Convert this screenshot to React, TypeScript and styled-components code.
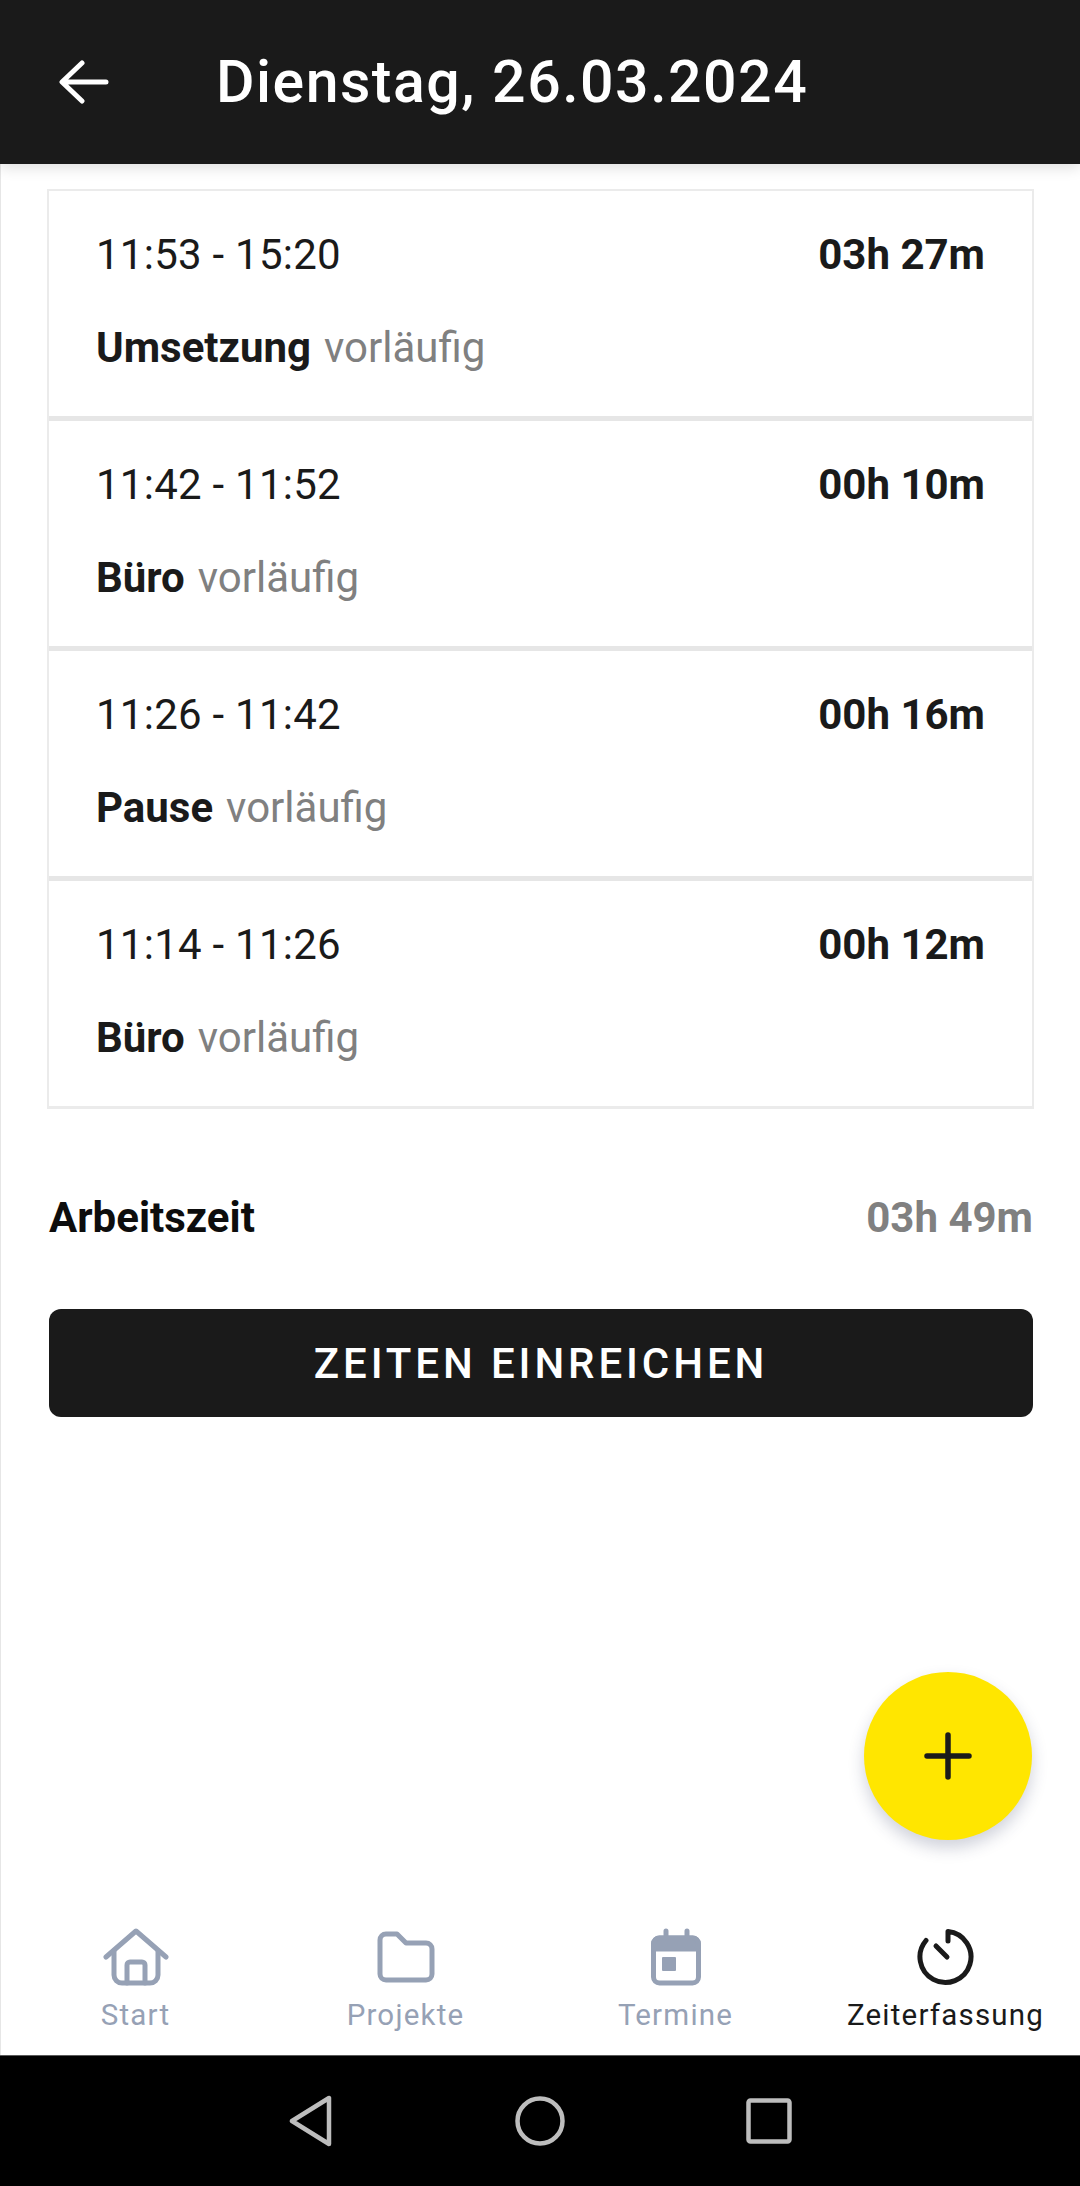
import React from 'react'
import styled, { createGlobalStyle } from 'styled-components'

const GlobalStyle = createGlobalStyle`
  html, body {
    margin: 0;
    padding: 0;
    background: #fff;
  }
  * {
    box-sizing: border-box;
  }
`

const Screen = styled.div`
  position: relative;
  width: 1080px;
  height: 2186px;
  display: flex;
  flex-direction: column;
  overflow: hidden;
  font-family: Roboto, "Liberation Sans", sans-serif;
  color: #1a1a1a;
  background: #fff;
`

const Header = styled.header`
  position: relative;
  z-index: 1;
  height: 164px;
  flex: none;
  display: flex;
  align-items: center;
  padding-left: 59px;
  background: #1a1a1a;
  box-shadow: 0 3px 14px rgba(0, 0, 0, 0.14);
`

const BackIcon = styled.svg`
  width: 50px;
  height: 44px;
  flex: none;
  fill: none;
  stroke: #fff;
  stroke-width: 5;
  stroke-linecap: round;
  stroke-linejoin: round;
`

const Title = styled.h1`
  margin: 0 0 0 107px;
  font-size: 59px;
  line-height: 64px;
  font-weight: 500;
  letter-spacing: 1.5px;
  color: #fff;
`

const Content = styled.main`
  flex: 1;
  display: flex;
  flex-direction: column;
  padding: 25px 46px 0;
  border-left: 1px solid #e6e6e6;
`

const EntryList = styled.section`
  border: 2px solid #ebebeb;
  border-bottom-width: 3px;
`

const Entry = styled.article`
  height: 225px;
  display: flex;
  flex-direction: column;
  gap: 45px;
  padding: 40px 47px 0 47px;

  & + & {
    height: 230px;
    border-top: 5px solid #e6e6e6;
  }
`

const EntryRow = styled.div`
  display: flex;
  justify-content: space-between;
  font-size: 42px;
  line-height: 48px;
`

const TimeRange = styled.span`
  letter-spacing: 0.25px;
`

const Strong = styled.span`
  font-weight: 700;
`

const Note = styled.span`
  margin-left: 13px;
  color: #808080;
`

const Summary = styled.div`
  display: flex;
  justify-content: space-between;
  margin: 85px 1px 0 2px;
  font-size: 42px;
  line-height: 48px;
  font-weight: 700;
  color: #0d0d0d;
`

const SummaryValue = styled.span`
  color: #808080;
`

const SubmitButton = styled.button`
  height: 108px;
  margin: 67px 1px 0 2px;
  border: none;
  border-radius: 12px;
  font-family: inherit;
  font-size: 42px;
  font-weight: 500;
  letter-spacing: 3.9px;
  color: #fff;
  background: #1a1a1a;
`

const AddButton = styled.button`
  position: absolute;
  left: 864px;
  top: 1672px;
  width: 168px;
  height: 168px;
  display: flex;
  align-items: center;
  justify-content: center;
  padding: 0;
  border: none;
  border-radius: 50%;
  background: #ffe600;
  box-shadow: 0 8px 16px rgba(40, 50, 90, 0.22);
`

const PlusIcon = styled.svg`
  width: 48px;
  height: 48px;
  fill: none;
  stroke: #1a1a1a;
  stroke-width: 5.5;
  stroke-linecap: round;
`

const TabBar = styled.nav`
  height: 127px;
  flex: none;
  display: grid;
  grid-template-columns: repeat(4, 270px);
  border-left: 1px solid #e6e6e6;
  background: #fff;
`

const Tab = styled.div<{ $active?: boolean }>`
  display: flex;
  flex-direction: column;
  align-items: center;
  justify-content: flex-start;
  margin-left: -1px;
  color: ${({ $active }) => ($active ? '#1a1a1a' : '#96a1b5')};
`

const TabIconSlot = styled.div`
  height: 58px;
  display: flex;
  align-items: center;
  justify-content: center;
`

const TabLabel = styled.span`
  margin-top: 12px;
  font-size: 29.5px;
  line-height: 34px;
  letter-spacing: 1.2px;
`

const TabIcon = styled.svg`
  fill: none;
  stroke: currentColor;
  stroke-width: 5;
  stroke-linecap: round;
  stroke-linejoin: round;
`

const SystemBar = styled.div`
  height: 131px;
  flex: none;
  display: flex;
  align-items: center;
  justify-content: center;
  gap: 0;
  background: #000;
  border-top: 1px solid #5a5a5a;
`

const SystemIcon = styled.svg`
  fill: none;
  stroke: #bdbdbd;
  stroke-width: 4.5;
  stroke-linejoin: round;
`

const SystemSlot = styled.div`
  width: 229px;
  display: flex;
  justify-content: center;
`

const entries = [
  { time: '11:53 - 15:20', duration: '03h 27m', name: 'Umsetzung' },
  { time: '11:42 - 11:52', duration: '00h 10m', name: 'Büro' },
  { time: '11:26 - 11:42', duration: '00h 16m', name: 'Pause' },
  { time: '11:14 - 11:26', duration: '00h 12m', name: 'Büro' },
]

const HomeIcon = () => (
  <TabIcon width="66" height="58" viewBox="0 0 66 58">
    <path d="M3 29 L33 3 L63 29" />
    <path d="M11 23 V47 a8 8 0 0 0 8 8 H47 a8 8 0 0 0 8 -8 V23" />
    <path d="M24 55 V37 a3 3 0 0 1 3 -3 H39 a3 3 0 0 1 3 3 V55" />
  </TabIcon>
)

const FolderIcon = () => (
  <TabIcon width="58" height="52" viewBox="0 0 58 52">
    <path d="M3 9 a6 6 0 0 1 6 -6 H20 L29 12 H49 a6 6 0 0 1 6 6 V43 a6 6 0 0 1 -6 6 H9 a6 6 0 0 1 -6 -6 Z" />
  </TabIcon>
)

const CalendarIcon = () => (
  <TabIcon width="50" height="58" viewBox="0 0 50 58">
    <path d="M15 3 V10 M36 3 V10" />
    <rect x="2.5" y="10" width="45" height="45" rx="6" />
    <path d="M2.5 16 a6 6 0 0 1 6 -6 H41.5 a6 6 0 0 1 6 6 V21 H2.5 Z" fill="currentColor" />
    <rect x="11" y="29" width="14" height="14" rx="1" fill="currentColor" stroke="none" />
  </TabIcon>
)

const TimerIcon = () => (
  <TabIcon width="58" height="58" viewBox="0 0 58 58">
    <path d="M31 13 V3.6 A25.5 25.5 0 1 1 9 12.5" />
    <path d="M19 18 L30 29" />
  </TabIcon>
)

const App = () => {
  return (
    <Screen>
      <GlobalStyle />
      <Header>
        <BackIcon viewBox="0 0 50 44">
          <path d="M47 22 H4 M23 3 L3 22 L23 41" />
        </BackIcon>
        <Title>Dienstag, 26.03.2024</Title>
      </Header>
      <Content>
        <EntryList>
          {entries.map(({ time, duration, name }) => (
            <Entry key={time}>
              <EntryRow>
                <TimeRange>{time}</TimeRange>
                <Strong>{duration}</Strong>
              </EntryRow>
              <EntryRow>
                <div>
                  <Strong>{name}</Strong>
                  <Note>vorläufig</Note>
                </div>
              </EntryRow>
            </Entry>
          ))}
        </EntryList>
        <Summary>
          <span>Arbeitszeit</span>
          <SummaryValue>03h 49m</SummaryValue>
        </Summary>
        <SubmitButton>ZEITEN EINREICHEN</SubmitButton>
      </Content>
      <AddButton aria-label="Hinzufügen">
        <PlusIcon viewBox="0 0 48 48">
          <path d="M24 3 V45 M3 24 H45" />
        </PlusIcon>
      </AddButton>
      <TabBar>
        <Tab>
          <TabIconSlot><HomeIcon /></TabIconSlot>
          <TabLabel>Start</TabLabel>
        </Tab>
        <Tab>
          <TabIconSlot><FolderIcon /></TabIconSlot>
          <TabLabel>Projekte</TabLabel>
        </Tab>
        <Tab>
          <TabIconSlot><CalendarIcon /></TabIconSlot>
          <TabLabel>Termine</TabLabel>
        </Tab>
        <Tab $active>
          <TabIconSlot><TimerIcon /></TabIconSlot>
          <TabLabel>Zeiterfassung</TabLabel>
        </Tab>
      </TabBar>
      <SystemBar>
        <SystemSlot>
          <SystemIcon width="46" height="52" viewBox="0 0 46 52">
            <path d="M41 3 V49 L4 26 Z" />
          </SystemIcon>
        </SystemSlot>
        <SystemSlot>
          <SystemIcon width="50" height="50" viewBox="0 0 50 50">
            <circle cx="25" cy="25" r="22.5" />
          </SystemIcon>
        </SystemSlot>
        <SystemSlot>
          <SystemIcon width="46" height="46" viewBox="0 0 46 46">
            <rect x="2.5" y="2.5" width="41" height="41" rx="2" />
          </SystemIcon>
        </SystemSlot>
      </SystemBar>
    </Screen>
  )
}

export default App
